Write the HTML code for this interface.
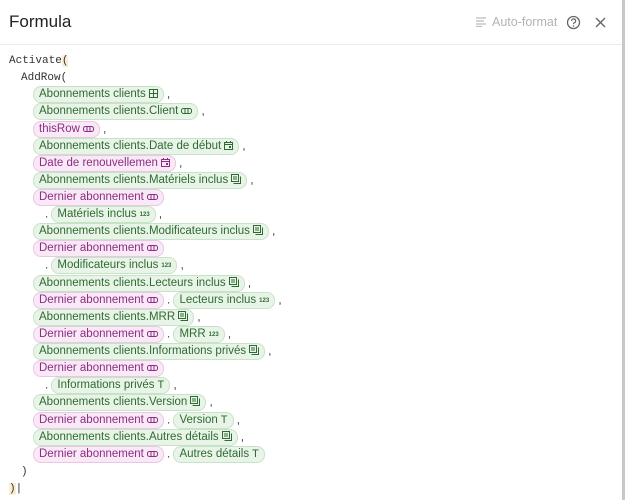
<!DOCTYPE html>
<html><head><meta charset="utf-8"><style>
body{margin:0;width:625px;height:500px;background:#fff;overflow:hidden;font-family:"Liberation Sans",sans-serif;position:relative}
.edge{position:absolute;right:0;top:0;width:3px;height:500px;background:#c8c8c8}
.hdr{position:absolute;left:0;top:0;width:622px;height:44px;border-bottom:1px solid #ececec}
.title{position:absolute;left:9px;top:12px;font-size:17px;color:#222}
.af{position:absolute;left:476px;top:15px;font-size:12.5px;color:#b3b3b3}
.ln{position:absolute;left:0;height:17px;line-height:17px;font-size:11.5px;white-space:nowrap;color:#333}
.mono{font-family:"Liberation Mono",monospace;font-size:11px;color:#333}
.c{display:inline-block;height:15px;line-height:15px;padding:0 5px;border-radius:8px;vertical-align:middle;font-size:11.5px}
.g{background:#e9f4e9;border:1px solid #c8e2c8;color:#2f6b30}
.p{background:#f9e9f6;border:1px solid #e8c7e2;color:#8c2c84}
.c svg{vertical-align:-1px;margin-left:3px}
.n{font-size:6px;font-weight:bold;margin-left:3px;vertical-align:1px}
.t{margin-left:3px;font-size:11px}
</style></head><body>
<div class="edge"></div>
<div class="hdr">
<div class="title">Formula</div>
<svg style="position:absolute;left:476px;top:17px" width="11" height="10"><path d="M0 1h10M0 4h8M0 7h10M0 9.5h6" stroke="#bbb" stroke-width="1.2"/></svg>
<div class="af" style="left:492px">Auto-format</div>
<svg style="position:absolute;left:566px;top:15px" width="15" height="15"><circle cx="7.5" cy="7.5" r="6" fill="none" stroke="#666" stroke-width="1.3"/><path d="M5.6 6a2 2 0 1 1 2.6 1.8c-.6.3-.7.7-.7 1.3" fill="none" stroke="#666" stroke-width="1.2"/><circle cx="7.5" cy="11" r=".8" fill="#666"/></svg>
<svg style="position:absolute;left:595px;top:17px" width="11" height="11"><path d="M1 1l9 9M10 1l-9 9" stroke="#666" stroke-width="1.4"/></svg>
</div>
<div id="code"></div>
<script>
const I={
tb:'<svg width="9" height="9"><rect x=".5" y=".5" width="8" height="8" fill="none" stroke="currentColor"/><path d="M.5 4.5h8M4.5 .5v8" stroke="currentColor"/></svg>',
rf:'<svg width="11" height="8"><rect x=".5" y="1.5" width="10" height="5" rx="2" fill="none" stroke="currentColor"/><path d="M4 1.5v5M7 1.5v5" stroke="currentColor"/></svg>',
dt:'<svg width="9" height="9"><rect x=".5" y="1.5" width="8" height="7" fill="none" stroke="currentColor"/><path d="M.5 3.5h8M2.5 0v2M6.5 0v2" stroke="currentColor"/><rect x="5" y="5" width="2" height="2" fill="currentColor"/></svg>',
ml:'<svg width="10" height="10"><rect x=".5" y=".5" width="7" height="7" fill="none" stroke="currentColor"/><path d="M2.5 9.5h7v-7" fill="none" stroke="currentColor"/><path d="M2 3h4M2 5h4" stroke="currentColor"/></svg>',
n:'<span class="n">123</span>',t:'<span class="t">T</span>'};
function g(t,i){return '<span class="c g">'+t+(I[i]||'')+'</span>'}
function p(t,i){return '<span class="c p">'+t+(I[i]||'')+'</span>'}
const D='Dernier abonnement',A='Abonnements clients';
const L=[
[9,'<span class="mono">Activate<span style="background:#fbeed5">(</span></span>'],
[21,'<span class="mono">AddRow(</span>'],
[33,g(A,'tb')+' ,'],
[33,g(A+'.Client','rf')+' ,'],
[33,p('thisRow','rf')+' ,'],
[33,g(A+'.Date de début','dt')+' ,'],
[33,p('Date de renouvellemen','dt')+' ,'],
[33,g(A+'.Matériels inclus','ml')+' ,'],
[33,p(D,'rf')],
[45,'. '+g('Matériels inclus','n')+' ,'],
[33,g(A+'.Modificateurs inclus','ml')+' ,'],
[33,p(D,'rf')],
[45,'. '+g('Modificateurs inclus','n')+' ,'],
[33,g(A+'.Lecteurs inclus','ml')+' ,'],
[33,p(D,'rf')+' . '+g('Lecteurs inclus','n')+' ,'],
[33,g(A+'.MRR','ml')+' ,'],
[33,p(D,'rf')+' . '+g('MRR','n')+' ,'],
[33,g(A+'.Informations privés','ml')+' ,'],
[33,p(D,'rf')],
[45,'. '+g('Informations privés','t')+' ,'],
[33,g(A+'.Version','ml')+' ,'],
[33,p(D,'rf')+' . '+g('Version','t')+' ,'],
[33,g(A+'.Autres détails','ml')+' ,'],
[33,p(D,'rf')+' . '+g('Autres détails','t')],
[21,'<span class="mono">)</span>'],
[9,'<span class="mono"><span style="background:#fbeed5">)</span>|</span>']];
let h='';L.forEach((l,k)=>{h+='<div class="ln" style="left:'+l[0]+'px;top:'+(52+k*17.12).toFixed(1)+'px">'+l[1]+'</div>'});
document.getElementById('code').innerHTML=h;
</script>
</body></html>
